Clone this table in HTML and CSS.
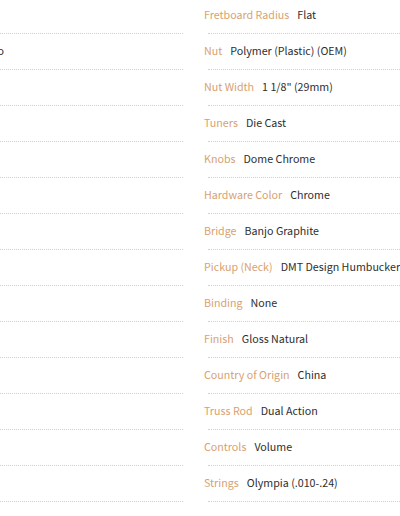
FILE: index.html
```html
<!DOCTYPE html>
<html lang="en">
<head>
<meta charset="utf-8">
<title>Specifications</title>
<link rel="stylesheet" href="styles.css">
</head>
<body>
<div class="specs">
  <ul class="col col-left">
    <li class="row"><div class="txt"></div></li>
    <li class="row"><div class="txt"><span class="label">Body Shape</span><span class="value">Guitar Banjo</span></div></li>
    <li class="row"><div class="txt"></div></li>
    <li class="row"><div class="txt"></div></li>
    <li class="row"><div class="txt"></div></li>
    <li class="row"><div class="txt"></div></li>
    <li class="row"><div class="txt"></div></li>
    <li class="row"><div class="txt"></div></li>
    <li class="row"><div class="txt"></div></li>
    <li class="row"><div class="txt"></div></li>
    <li class="row"><div class="txt"></div></li>
    <li class="row"><div class="txt"></div></li>
    <li class="row"><div class="txt"></div></li>
    <li class="row"><div class="txt"></div></li>
  </ul>
  <ul class="col col-right">
    <li class="row"><div class="txt"><span class="label">Fretboard Radius</span><span class="value">Flat</span></div></li>
    <li class="row"><div class="txt"><span class="label">Nut</span><span class="value">Polymer (Plastic) (OEM)</span></div></li>
    <li class="row"><div class="txt"><span class="label">Nut Width</span><span class="value">1 1/8" (29mm)</span></div></li>
    <li class="row"><div class="txt"><span class="label">Tuners</span><span class="value">Die Cast</span></div></li>
    <li class="row"><div class="txt"><span class="label">Knobs</span><span class="value">Dome Chrome</span></div></li>
    <li class="row"><div class="txt"><span class="label">Hardware Color</span><span class="value">Chrome</span></div></li>
    <li class="row"><div class="txt"><span class="label">Bridge</span><span class="value">Banjo Graphite</span></div></li>
    <li class="row"><div class="txt"><span class="label">Pickup (Neck)</span><span class="value">DMT Design Humbucker</span></div></li>
    <li class="row"><div class="txt"><span class="label">Binding</span><span class="value">None</span></div></li>
    <li class="row"><div class="txt"><span class="label">Finish</span><span class="value">Gloss Natural</span></div></li>
    <li class="row"><div class="txt"><span class="label">Country of Origin</span><span class="value">China</span></div></li>
    <li class="row"><div class="txt"><span class="label">Truss Rod</span><span class="value">Dual Action</span></div></li>
    <li class="row"><div class="txt"><span class="label">Controls</span><span class="value">Volume</span></div></li>
    <li class="row"><div class="txt"><span class="label">Strings</span><span class="value">Olympia (.010-.24)</span></div></li>
  </ul>
</div>
</body>
</html>
```
FILE: styles.css
```css
html, body {
  margin: 0;
  padding: 0;
  background: #ffffff;
  overflow: hidden;
}
body {
  font-family: "Noto Sans CJK KR", "Noto Sans", sans-serif;
  font-size: 10.7px;
  color: #333333;
}
.specs {
  display: grid;
  grid-template-columns: 400px 220px;
  column-gap: 21px;
  margin-left: -217px;
  padding-top: 7px;
  width: 641px;
}
.col {
  list-style: none;
  margin: 0;
  padding: 0;
}
.row {
  margin-bottom: 9px;
}
.txt {
  line-height: 16px;
  height: 16px;
  white-space: nowrap;
  margin-bottom: 10px;
}
.col-left .txt {
  text-align: right;
  padding-right: 179px;
}
.row::after {
  content: "";
  display: block;
  margin-left: 4px;
  border-top: 1px dotted #d0d0d0;
}
.label {
  color: #d8a171;
  margin-right: 8px;
}
.value {
  color: #2e2e2e;
}
```
